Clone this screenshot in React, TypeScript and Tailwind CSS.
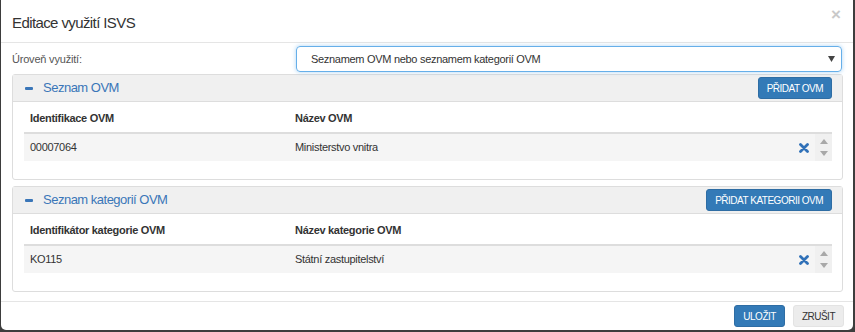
import React from "react";

function RemoveIcon() {
  return (
    <svg width="10" height="10" viewBox="0 0 10 10" className="block">
      <path d="M1.5 1.5 L8.5 8.5 M8.5 1.5 L1.5 8.5" stroke="#3071b8" strokeWidth="2.8" strokeLinecap="round" />
    </svg>
  );
}

function ScrollArrows() {
  return (
    <div className="w-[17px] self-stretch bg-[#f0f0f0] flex flex-col items-center justify-between py-[5px]">
      <svg width="8" height="5" viewBox="0 0 8 5" className="block">
        <path d="M0 5 L4 0 L8 5 Z" fill="#a8a8a8" />
      </svg>
      <svg width="8" height="5" viewBox="0 0 8 5" className="block">
        <path d="M0 0 L8 0 L4 5 Z" fill="#a8a8a8" />
      </svg>
    </div>
  );
}

type PanelProps = {
  title: string;
  action: string;
  head1: string;
  head2: string;
  cell1: string;
  cell2: string;
};

function ListPanel({ title, action, head1, head2, cell1, cell2 }: PanelProps) {
  return (
    <div className="border border-[#dddddd] rounded-[3px]">
      {/* panel heading */}
      <div className="h-[27px] bg-[#f0f0f0] border-b border-[#dddddd] flex items-center justify-between pl-[12px] pr-[10px]">
        <div className="flex items-center">
          <div className="w-[8px] h-[3px] bg-[#3a76b8] rounded-[1px]" />
          <span className="ml-[10px] text-[13px] tracking-[-0.5px] text-[#3a76b8]">{title}</span>
        </div>
        <button className="h-[22px] px-[8px] rounded-[3px] bg-[#337ab7] border border-[#2e6da4] text-white text-[10px] tracking-[-0.5px] uppercase">
          {action}
        </button>
      </div>

      {/* panel body */}
      <div className="pt-[3px] pb-[18px] pl-[11px] pr-[10px]">
        <div className="flex h-[29px] items-center border-b-2 border-[#dddddd] text-[11px] font-bold tracking-[-0.3px] text-[#333]">
          <div className="w-[265px] pl-[6px]">{head1}</div>
          <div className="pl-[6px]">{head2}</div>
        </div>
        <div className="flex h-[27px] items-center bg-[#f5f5f5] text-[11px] tracking-[-0.3px] text-[#333]">
          <div className="w-[265px] pl-[6px]">{cell1}</div>
          <div className="flex-1 pl-[6px]">{cell2}</div>
          <div className="pr-[6px]">
            <RemoveIcon />
          </div>
          <ScrollArrows />
        </div>
      </div>
    </div>
  );
}

export default function App() {
  return (
    <div className="w-[855px] h-[332px] bg-[#3d3d3d] font-['Liberation_Sans',Arial,sans-serif] overflow-hidden">
      <div className="ml-[1px] w-[852px] h-[330px] bg-white rounded-b-[5px] flex flex-col">
        {/* header */}
        <div className="h-[43px] border-b border-[#e5e5e5] flex items-start justify-between pl-[11px] pr-[12px]">
          <h4 className="mt-[12px] text-[15px] tracking-[-0.6px] text-[#333]">Editace využití ISVS</h4>
          <span className="mt-[5px] text-[17px] font-bold text-[#c9c9c9] leading-[20px]">×</span>
        </div>

        {/* body */}
        <div className="flex-1 pl-[11px] pr-[10px] pt-[3px]">
          <div className="flex items-center h-[26px]">
            <label className="w-[284px] text-[11px] tracking-[-0.2px] text-[#555]">Úroveň využití:</label>
            <div className="flex-1 mr-[1px] h-[26px] border border-[#66afe9] rounded-[4px] shadow-[0_0_4px_rgba(102,175,233,0.55)] flex items-center justify-between pl-[14px] pr-[6px]">
              <span className="text-[11px] tracking-[-0.3px] text-[#333]">Seznamem OVM nebo seznamem kategorií OVM</span>
              <svg width="7" height="6" viewBox="0 0 7 6" className="block">
                <path d="M0 0 L7 0 L3.5 6 Z" fill="#444" />
              </svg>
            </div>
          </div>

          <div className="mt-[2px]">
            <ListPanel
              title="Seznam OVM"
              action="Přidat OVM"
              head1="Identifikace OVM"
              head2="Název OVM"
              cell1="00007064"
              cell2="Ministerstvo vnitra"
            />
          </div>
          <div className="mt-[6px]">
            <ListPanel
              title="Seznam kategorií OVM"
              action="Přidat kategorii OVM"
              head1="Identifikátor kategorie OVM"
              head2="Název kategorie OVM"
              cell1="KO115"
              cell2="Státní zastupitelství"
            />
          </div>
        </div>

        {/* footer */}
        <div className="h-[29px] border-t border-[#e5e5e5] flex items-start justify-end gap-[8px] pr-[9px] pt-[3px]">
          <button className="h-[22px] px-[8px] rounded-[3px] bg-[#337ab7] border border-[#2e6da4] text-white text-[10px] tracking-[-0.5px]">
            ULOŽIT
          </button>
          <button className="h-[22px] px-[8px] rounded-[3px] bg-[#ececec] border border-[#e3e3e3] text-[#333] text-[10px] tracking-[-0.5px]">
            ZRUŠIT
          </button>
        </div>
      </div>
    </div>
  );
}
